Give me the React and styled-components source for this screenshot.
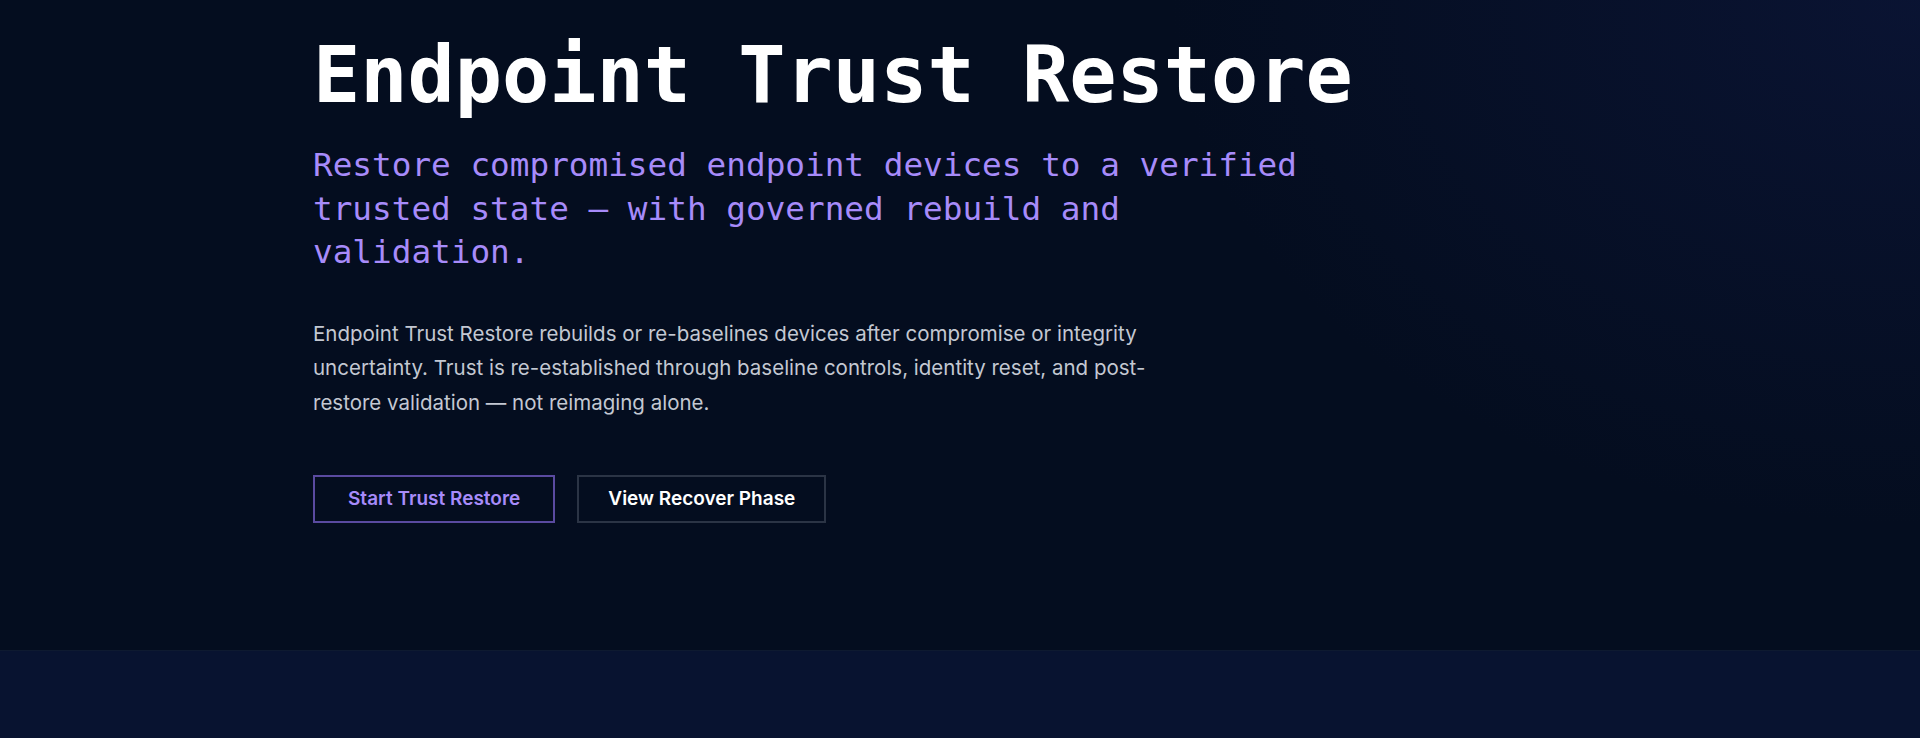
import React from "react";
import styled, { createGlobalStyle } from "styled-components";

const Global = createGlobalStyle`
  html, body { margin: 0; padding: 0; background: #040d1f; }
  body { font-family: Inter, "Noto Sans", sans-serif; -webkit-font-smoothing: antialiased; }
  * { box-sizing: border-box; }
`;

const Page = styled.div`
  width: 100%;
  min-height: 738px;
  background: #081330;
`;

const Hero = styled.section`
  height: 651px;
  padding-top: 32px;
  background:
    radial-gradient(ellipse 1000px 700px at 100% 0%, rgba(16, 26, 70, 0.5), rgba(16, 26, 70, 0) 75%),
    #040d1f;
  border-bottom: 1px solid #0e1a30;
`;

const Container = styled.div`
  max-width: 1294px;
  margin: 0 auto;
`;

const Title = styled.h1`
  margin: 0;
  font-family: "DejaVu Sans Mono", "Liberation Mono", monospace;
  font-weight: 700;
  font-size: 78.5px;
  line-height: 1.1;
  color: #ffffff;
`;

const Subtitle = styled.p`
  margin: 26px 0 0;
  max-width: 1000px;
  font-family: "DejaVu Sans Mono", "Liberation Mono", monospace;
  font-weight: 400;
  font-size: 32.7px;
  line-height: 43.5px;
  color: #a78bfa;
`;

const Body = styled.p`
  margin: 42px 0 0;
  max-width: 842px;
  font-size: 20.5px;
  line-height: 34.6px;
  color: #c3c8d2;
`;

const Actions = styled.div`
  display: flex;
  gap: 22px;
  margin-top: 54px;
`;

const Button = styled.a`
  display: inline-flex;
  align-items: center;
  justify-content: center;
  height: 48px;
  padding: 0 ${(p) => p.$pad}px;
  border: 2px solid ${(p) => (p.$primary ? "#5a4aa0" : "#2b3445")};
  background: transparent;
  color: ${(p) => (p.$primary ? "#a78bfa" : "#ffffff")};
  font-family: Inter, "Noto Sans", sans-serif;
  font-weight: 600;
  font-size: 19px;
  text-decoration: none;
  cursor: pointer;
`;

export default function App() {
  return (
    <Page>
      <Global />
      <Hero>
        <Container>
          <Title>Endpoint Trust Restore</Title>
          <Subtitle>
            Restore compromised endpoint devices to a verified trusted state — with governed rebuild and validation.
          </Subtitle>
          <Body>
            Endpoint Trust Restore rebuilds or re-baselines devices after compromise or integrity uncertainty. Trust is
            re-established through baseline controls, identity reset, and post-restore validation — not reimaging alone.
          </Body>
          <Actions>
            <Button $primary $pad={33}>Start Trust Restore</Button>
            <Button $pad={29}>View Recover Phase</Button>
          </Actions>
        </Container>
      </Hero>
    </Page>
  );
}
